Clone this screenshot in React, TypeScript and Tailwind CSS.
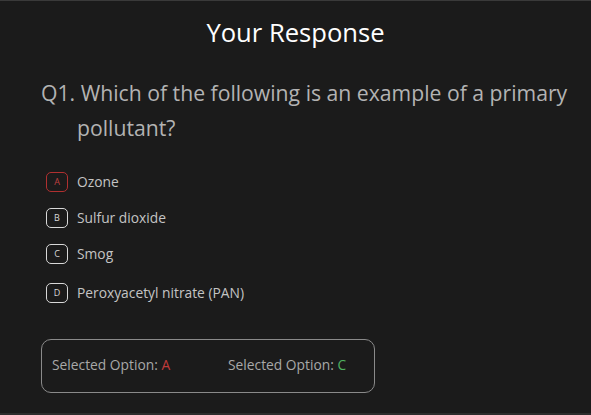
const options = [
  { key: "A", label: "Ozone", picked: true },
  { key: "B", label: "Sulfur dioxide", picked: false },
  { key: "C", label: "Smog", picked: false },
  { key: "D", label: "Peroxyacetyl nitrate (PAN)", picked: false },
];

export default function App() {
  return (
    <main
      className="w-[591px] h-[415px] bg-[#1b1b1b] border-t border-[#3a3a3a] border-b-2 border-b-[#2c2c2c] overflow-hidden"
      style={{ fontFamily: '"Open Sans", "Noto Sans", sans-serif' }}
    >
      <h1 className="text-center text-white text-[25.6px] font-medium leading-none pt-[19px]">
        Your Response
      </h1>
      <p className="mt-[29px] pl-[77px] -indent-[36px] pr-2 text-[21.2px] leading-[35px] text-[#b3b3b3]">
        Q1. Which of the following is an example of a primary pollutant?
      </p>
      <ul className="mt-[27px] pl-[46px] flex flex-col">
        {options.map((o, i) => (
          <li
            key={o.key}
            className={`h-[20px] flex items-center gap-[9px] ${i === 3 ? "mt-[19px]" : i > 0 ? "mt-[16px]" : ""}`}
          >
            <span
              className={`w-[22px] h-[20px] rounded-[5px] border flex items-center justify-center text-[9px] ${
                o.picked ? "border-[#b03030] text-[#c04040]" : "border-[#d8d8d8] text-[#d8d8d8]"
              }`}
            >
              {o.key}
            </span>
            <span className="text-[13.8px] leading-none text-[#c4c4c4]">{o.label}</span>
          </li>
        ))}
      </ul>
      <div className="mt-[36px] ml-[41px] w-[334px] h-[54px] rounded-[10px] border border-[#8a8a8a] flex items-center pl-[10px] text-[13.8px] text-[#a8a8a8]">
        <span className="w-[176px]">
          Selected Option: <span className="text-[#c03a3a]">A</span>
        </span>
        <span>
          Selected Option: <span className="text-[#4fb060]">C</span>
        </span>
      </div>
    </main>
  );
}
